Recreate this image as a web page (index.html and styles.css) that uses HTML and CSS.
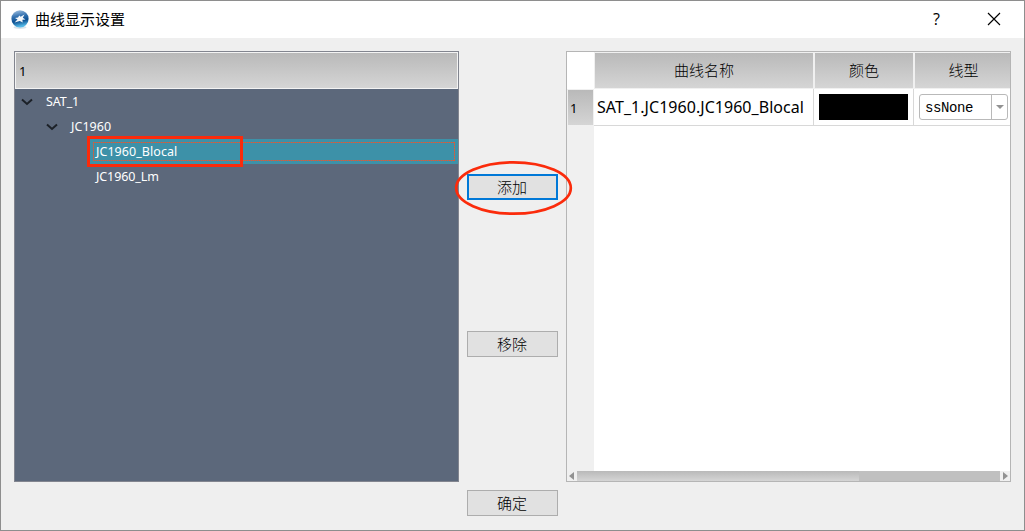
FILE: index.html
```html
<!DOCTYPE html>
<html lang="zh-CN">
<head>
<meta charset="utf-8">
<title>曲线显示设置</title>
<link rel="stylesheet" href="styles.css">
</head>
<body>
<div class="window">
  <header class="titlebar">
    <svg class="app-icon" width="18" height="19" viewBox="0 0 18 19">
      <defs>
        <linearGradient id="ball" x1="0" y1="0" x2="0.2" y2="1"><stop offset="0" stop-color="#aec9e5"/><stop offset=".42" stop-color="#3270af"/><stop offset=".7" stop-color="#0b4f91"/><stop offset="1" stop-color="#54b8e6"/></linearGradient>
      </defs>
      <ellipse cx="9" cy="17.4" rx="6.5" ry="1.5" fill="#d8e3ec"/>
      <circle cx="9" cy="8.8" r="8.6" fill="url(#ball)"/>
      <path d="M3.5 12.5 6.5 9.5 4 8 7 7.4 8.3 5.5 9.6 6.8 13.5 4.5 11.8 7.7 14.5 9.5 11.4 9.8 11.7 12.5 8.8 11Z" fill="#f5f8fb"/>
    </svg>
    <h1 class="title">曲线显示设置</h1>
    <span class="help">?</span>
    <svg class="close" width="14" height="14" viewBox="0 0 14 14"><path d="M1 1 13 13M13 1 1 13" stroke="#000" stroke-width="1.15" fill="none"/></svg>
  </header>
  <main class="content">
    <section class="tree">
      <div class="tree-header">1</div>
      <div class="tree-row"><svg class="chevron" width="12" height="8" viewBox="0 0 12 8"><path d="M1 1.5 6 6 11 1.5"/></svg><span class="node">SAT_1</span></div>
      <div class="tree-row level-two"><svg class="chevron" width="12" height="8" viewBox="0 0 12 8"><path d="M1 1.5 6 6 11 1.5"/></svg><span class="node node-wide">JC1960</span></div>
      <div class="tree-row leaf selected"><span class="node node-wide">JC1960_Blocal</span>
        <svg class="focus" width="362" height="19" viewBox="0 0 362 19"><rect x=".5" y=".5" width="361" height="18"/><path d="M0 .5H362"/><path d="M0 18.5H362"/><path d="M.5 0V19"/><path d="M361.5 0V19"/></svg>
        <span class="mark-box"></span>
      </div>
      <div class="tree-row leaf"><span class="node">JC1960_Lm</span></div>
    </section>
    <nav class="actions">
      <button class="button primary">添加<svg class="mark-ellipse" width="119" height="56" viewBox="0 0 119 56"><ellipse cx="59.5" cy="28" rx="57.3" ry="25.7"/></svg></button>
      <button class="button remove">移除</button>
      <button class="button confirm">确定</button>
    </nav>
    <section class="table">
      <div class="grid">
        <div class="corner"></div>
        <div class="column-header">曲线名称</div>
        <div class="column-header">颜色</div>
        <div class="column-header last">线型</div>
        <div class="row-header">1</div>
        <div class="cell"><span class="curve-name">SAT_1.JC1960.JC1960_Blocal</span></div>
        <div class="cell color-cell"><div class="swatch"></div></div>
        <div class="cell last combo-cell"><div class="combo"><span class="combo-text">ssNone</span><span class="combo-arrow"><svg width="8" height="4" viewBox="0 0 8 4"><path d="M0 0H8L4 4Z" fill="#929292"/></svg></span></div></div>
      </div>
      <div class="blank"></div>
      <div class="scrollbar">
        <svg width="10" height="10" viewBox="0 0 10 10"><path d="M7 1V9L2 5Z" fill="#929292"/></svg>
        <div class="track"><div class="thumb"></div></div>
        <svg width="10" height="10" viewBox="0 0 10 10"><path d="M3 1V9L8 5Z" fill="#929292"/></svg>
      </div>
    </section>
  </main>
</div>
</body>
</html>
```
FILE: styles.css
```css
* { box-sizing: border-box; }
body { margin: 0; font-family: "Noto Sans", "Noto Sans CJK SC", sans-serif; color: #000; }
svg { display: block; flex: none; }
.window { width: 1025px; height: 531px; border: 1px solid #8e8e8e; background: #efefef; display: flex; flex-direction: column; overflow: hidden; }
.titlebar { height: 37px; flex: none; background: #fff; display: flex; align-items: center; padding: 0 23px 0 10px; }
.title { margin: 0 auto 0 6px; padding-bottom: 2px; font: 400 15px/20px "Noto Sans CJK SC", sans-serif; }
.help { font: 400 16px/20px "Open Sans", sans-serif; margin-right: 47px; padding-bottom: 1px; }
.close { position: relative; top: -1px; }
.content { flex: 1; display: grid; grid-template-columns: 445px 91px 445px; column-gap: 8px; padding: 13px 13px 13px; }
.tree { height: 431px; border: 1px solid #82858f; background: #5c687b; }
.tree-header { height: 37px; border: 1px solid #f3f3f3; background: linear-gradient(#b9b9b9, #d5d5d5); padding-left: 3px; font: 13px/36px "Noto Sans", sans-serif; }
.tree-row { height: 25px; display: flex; align-items: center; padding-left: 6px; color: #fff; font: 13px/25px "Noto Sans", sans-serif; position: relative; }
.chevron { margin-right: 13px; }
.chevron path { fill: none; stroke: #1c2128; stroke-width: 2; }
.level-two { padding-left: 31px; }
.leaf { padding-left: 7px; margin-left: 74px; }
.selected { background: #3d91a8; }
.node { white-space: nowrap; font-size: 12.5px; letter-spacing: -.1px; }
.node-wide { letter-spacing: .05px; }
.focus { position: absolute; left: 4px; top: 3px; }
.focus rect { fill: none; stroke: #b9694f; stroke-opacity: .55; }
.focus path { fill: none; stroke: #ea5630; stroke-width: 1; stroke-dasharray: 1 1; }
.mark-box { position: absolute; left: -2px; top: -3px; width: 156px; height: 31px; border: 3px solid #fb2b0b; }
.actions { height: 466px; padding-top: 123px; display: flex; flex-direction: column; }
.button { position: relative; height: 26px; flex: none; padding: 0 1px 1px 0; border: 1px solid #adadad; background: #e1e1e1; color: #000; font: 300 15px/22px "Noto Sans CJK SC", sans-serif; }
.primary { border: 2px solid #0078d7; }
.remove { margin-top: 131px; }
.confirm { margin-top: 133px; }
.mark-ellipse { position: absolute; left: -15px; top: -16px; }
.mark-ellipse ellipse { fill: none; stroke: #fb2b0b; stroke-width: 2.7; }
.table { height: 431px; border: 1px solid #b5b5b5; background: #fff; display: flex; flex-direction: column; }
.grid { display: grid; grid-template-columns: 27px 220px 100px 96px; grid-template-rows: 37px 37px; }
.column-header { border: 1px solid #f0f0f0; background: linear-gradient(#b9b9b9, #d5d5d5); text-align: center; font: 300 15px/33px "Noto Sans CJK SC", sans-serif; }
.column-header.last { border-right: 0; padding-left: 2px; }
.row-header { border: 1px solid #f0f0f0; background: linear-gradient(#b9b9b9, #d5d5d5); padding-left: 2px; font: 13px/36px "Noto Sans", sans-serif; }
.cell { border-right: 1px solid #d8d8d8; border-bottom: 1px solid #d8d8d8; display: flex; align-items: center; padding-left: 3px; }
.cell.last { border-right: 0; }
.curve-name { font: 16px/20px "Noto Sans", sans-serif; white-space: nowrap; letter-spacing: .04px; }
.color-cell { padding: 0 5px; }
.swatch { width: 89px; height: 26px; background: #000; }
.cell.combo-cell { padding-left: 5px; }
.combo { width: 89px; height: 26px; border: 1px solid #b9b9b9; border-radius: 3px; display: flex; }
.combo-text { width: 71px; padding-left: 5px; font: 14px/27px "Liberation Mono", monospace; letter-spacing: -.4px; }
.combo-arrow { width: 16px; border-left: 1px solid #b9b9b9; display: flex; align-items: center; justify-content: center; }
.blank { flex: 1; border-left: 27px solid #f0f0f0; }
.scrollbar { height: 10px; background: #f0f0f0; display: flex; justify-content: space-between; }
.track { width: 423px; background: #c0c0c0; }
.thumb { width: 282px; height: 10px; background: linear-gradient(#b9b9b9, #d5d5d5); }
```
